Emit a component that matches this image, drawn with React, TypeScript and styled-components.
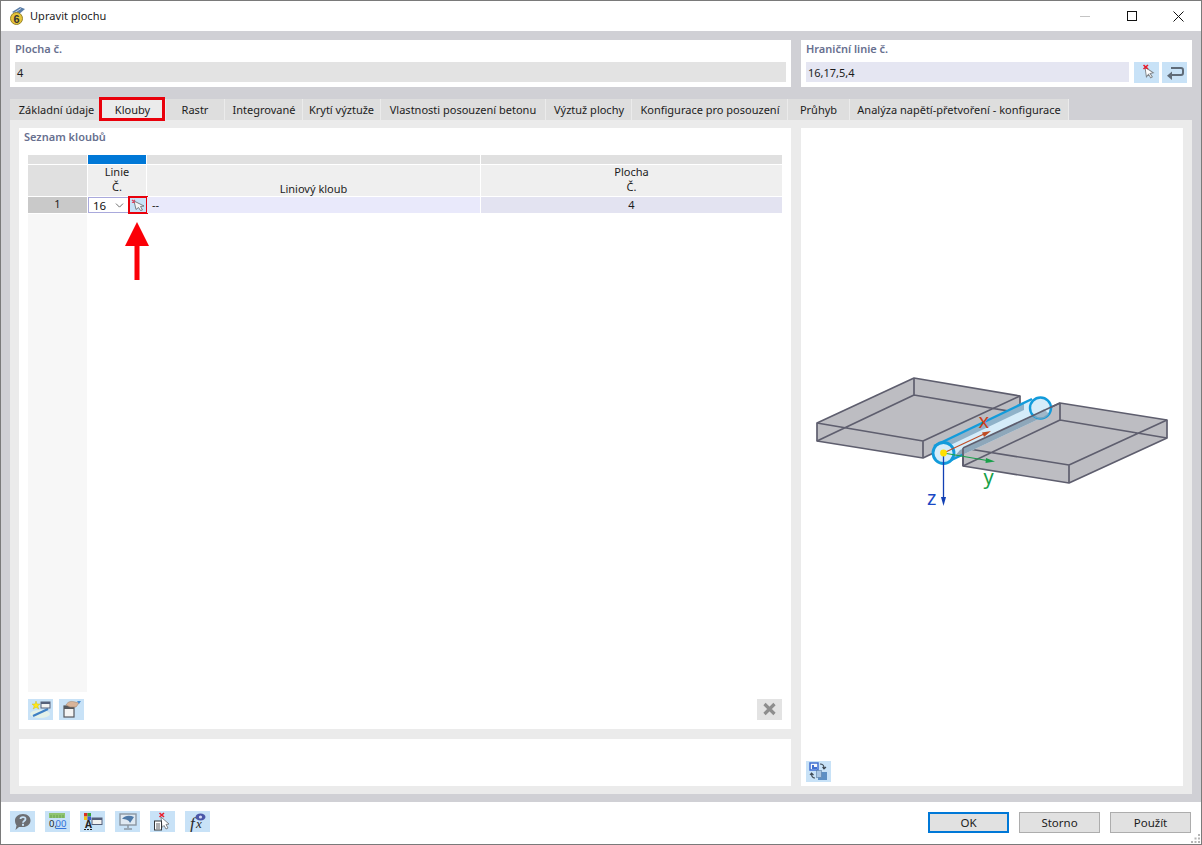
import { ReactNode } from "react";
import styled, { createGlobalStyle } from "styled-components";
import { ChevronDown } from "lucide-react";

const GlobalStyle = createGlobalStyle`
  html, body {
    margin: 0;
    padding: 0;
    background: #fff;
  }
  * {
    box-sizing: border-box;
  }
`;

const Window = styled.div`
  width: 1202px;
  height: 845px;
  display: flex;
  flex-direction: column;
  background: #fff;
  border: 1px solid #7a7a7a;
  font-family: "Noto Sans", "Open Sans", sans-serif;
  font-size: 11px;
  color: #1c1c1c;
  overflow: hidden;
`;

const TitleBar = styled.div`
  height: 30px;
  flex: none;
  display: flex;
  align-items: center;
  padding-left: 7px;
  gap: 2px;
`;

const TitleText = styled.div`
  font-size: 11px;
  letter-spacing: 0.05px;
  flex: 1;
  margin-top: -1px;
`;

const WinControl = styled.div`
  width: 45px;
  height: 30px;
  flex: none;
  display: flex;
  align-items: center;
  justify-content: center;
`;

const Body = styled.div`
  flex: 1;
  background: #d0d0d5;
  padding: 9px 9px 8px;
  display: flex;
  flex-direction: column;
`;

const TopRow = styled.div`
  display: flex;
  gap: 10px;
  height: 47px;
  margin-bottom: 12px;
`;

const TopBox = styled.div<{ $w: number }>`
  width: ${(p) => p.$w}px;
  background: #fff;
  padding: 1px 5px 0;
`;

const FieldLabel = styled.div`
  height: 21px;
  line-height: 15px;
  font-weight: 600;
  color: #68708f;
`;

const FieldRow = styled.div`
  display: flex;
  align-items: flex-start;
  gap: 5px;
`;

const Field = styled.div<{ $bg: string }>`
  flex: 1;
  height: 20px;
  line-height: 22px;
  padding-left: 2px;
  background: ${(p) => p.$bg};
`;

const ButtonPair = styled.div`
  display: flex;
  gap: 3px;
`;

const TabBar = styled.div`
  display: flex;
  height: 21px;
`;

const Tab = styled.div<{ $w: number; $shift: number; $active?: boolean }>`
  width: ${(p) => p.$w}px;
  flex: none;
  height: 21px;
  line-height: 22px;
  padding-left: ${(p) => p.$shift}px;
  text-align: center;
  white-space: nowrap;
  background: ${(p) => (p.$active ? "#ebebeb" : "#dedede")};
  border-right: 1px solid #ebebeb;
  position: relative;
  ${(p) =>
    p.$active &&
    `&::after {
      content: "";
      position: absolute;
      inset: -2px 0 -1px -1px;
      border: 3px solid #e9000b;
    }`}
`;

const TabPanel = styled.div`
  flex: 1;
  background: #ebebeb;
  padding: 8px 9px;
  display: flex;
  gap: 10px;
`;

const LeftCol = styled.div`
  width: 772px;
  display: flex;
  flex-direction: column;
  gap: 10px;
`;

const ListCard = styled.div`
  height: 601px;
  background: #fff;
  display: flex;
  flex-direction: column;
`;

const CardTitle = styled.div`
  height: 27px;
  padding: 1px 0 0 5px;
  line-height: 15px;
  font-weight: 600;
  color: #68708f;
`;

const TableArea = styled.div`
  margin: 0 9px;
  height: 537px;
  position: relative;
`;

const Table = styled.div`
  display: grid;
  height: 100%;
  grid-template-columns: 59px 58px 333px 301px;
  grid-template-rows: 9px 31px 16px 1fr;
  gap: 1px;
`;

const Band = styled.div<{ $blue?: boolean }>`
  background: ${(p) => (p.$blue ? "#0078d7" : "#e0e0e0")};
`;

const Corner = styled.div`
  background: #e0e0e0;
`;

const HeadCell = styled.div<{ $bottom?: boolean }>`
  background: #efefef;
  text-align: center;
  line-height: 15px;
  display: flex;
  flex-direction: column;
  justify-content: ${(p) => (p.$bottom ? "flex-end" : "center")};
  padding-bottom: ${(p) => (p.$bottom ? 0 : 3)}px;
`;

const RowNum = styled.div`
  background: #c9c9c9;
  text-align: center;
  line-height: 14px;
`;

const ComboCell = styled.div`
  background: #fff;
  display: flex;
`;

const Combo = styled.div`
  width: 41px;
  height: 16px;
  border: 1px solid #a9a9dc;
  display: flex;
  align-items: center;
  justify-content: space-between;
  padding: 0 2px 0 4px;
  font-size: 11.5px;
  color: #111;
`;

const CellPick = styled.div`
  width: 16px;
  height: 14px;
  margin: 1px 0 0 1px;
  background: #c8e2f7;
  outline: 2px solid #e9000b;
  display: flex;
  align-items: center;
  justify-content: center;
`;

const TextCell = styled.div<{ $bg: string; $center?: boolean }>`
  background: ${(p) => p.$bg};
  line-height: 15px;
  padding-left: ${(p) => (p.$center ? 0 : 5)}px;
  text-align: ${(p) => (p.$center ? "center" : "left")};
`;

const RowFill = styled.div`
  background: #f7f7f7;
`;

const ArrowOverlay = styled.svg`
  position: absolute;
  left: 96px;
  top: 66px;
`;

const CardTools = styled.div`
  display: flex;
  gap: 6px;
  margin: 7px 9px 0;
`;

const Spacer = styled.div`
  flex: 1;
`;

const IconBtn = styled.div<{ $off?: boolean }>`
  width: 25px;
  height: 21px;
  flex: none;
  background: ${(p) => (p.$off ? "#e3e3e3" : "#c8e2f7")};
  display: flex;
  align-items: center;
  justify-content: center;
`;

const MessageBox = styled.div`
  flex: 1;
  background: #fff;
`;

const PreviewCard = styled.div`
  width: 382px;
  background: #fff;
  display: flex;
  flex-direction: column;
  padding-bottom: 4px;
`;

const Diagram = styled.svg`
  display: block;
  flex: none;
`;

const PreviewTools = styled.div`
  padding-left: 5px;
`;

const Footer = styled.div`
  height: 42px;
  flex: none;
  display: flex;
  padding: 9px 10px 0 9px;
  position: relative;
`;

const FooterIcons = styled.div`
  display: flex;
  gap: 10px;
  flex: 1;
`;

const FooterBtns = styled.div`
  display: flex;
  gap: 10px;
  margin-top: 1px;
`;

const DialogBtn = styled.div<{ $primary?: boolean }>`
  width: 81px;
  height: 21px;
  background: #e1e1e1;
  border: ${(p) => (p.$primary ? "2px solid #0078d7" : "1px solid #adadad")};
  font-size: 11.5px;
  display: flex;
  align-items: center;
  justify-content: center;
`;

const Grip = styled.svg`
  position: absolute;
  right: 1px;
  bottom: 1px;
`;

const Ico = ({ children }: { children: ReactNode }) => (
  <svg width="25" height="21" viewBox="0 0 25 21">
    {children}
  </svg>
);

const cursor = "M0 0 L0 10.5 L2.6 8.2 L4.4 12.2 L6.2 11.4 L4.4 7.5 L7.8 7.3 Z";

const PickIcon = () => (
  <Ico>
    <path d={cursor} transform="translate(11 5) scale(0.95) rotate(-8)" fill="#fff" stroke="#7f8489" strokeWidth="1" />
    <path d="M9.5 3 L14 7 M14 3 L9.5 7" stroke="#ea1c2c" strokeWidth="1.6" />
  </Ico>
);

const SmallPick = () => (
  <svg width="16" height="14" viewBox="0 0 16 14">
    <path d="M4 3 L14 8 L10.5 8.5 L12.5 12 L10.5 12.5 L8.5 9.5 L6 11.5 Z" fill="#f4f4f4" stroke="#6f7479" strokeWidth="0.9" />
    <path d="M2 2 L5 4.5 M5 2 L2 4.5" stroke="#d9455f" strokeWidth="1.2" />
  </svg>
);

const ReturnIcon = () => (
  <Ico>
    <path d="M9 6 H19 Q21 6 21 8 V11 Q21 13 19 13 H9" fill="none" stroke="#5f6b78" strokeWidth="2" />
    <path d="M10 9.5 L5 13.8 L10 18 Z" fill="#5f6b78" />
  </Ico>
);

const NewLineIcon = () => (
  <Ico>
    <ellipse cx="12" cy="15" rx="10" ry="4" fill="#e4f1e8" />
    <path d="M5 17 L20 10" stroke="#3e7fc4" strokeWidth="2.2" />
    <path d="M8 2 L9 5 L12 5 L9.8 7 L10.8 10 L8 8.3 L5.2 10 L6.2 7 L4 5 L7 5 Z" fill="#ffe61a" stroke="#c9b800" strokeWidth="0.4" />
    <rect x="13" y="3" width="9" height="6" fill="#f2f2f2" stroke="#56607a" />
    <rect x="13" y="3" width="9" height="2" fill="#56607a" />
  </Ico>
);

const EditFolderIcon = () => (
  <Ico>
    <rect x="5" y="7" width="10" height="11" fill="#f4f4f4" stroke="#55585e" strokeWidth="1.2" />
    <rect x="5" y="7" width="10" height="3" fill="#55585e" />
    <path d="M7 6 C9 2 13 2 16 3 L20 4 L17 8 L11 8 Z" fill="#d8b49a" stroke="#a68870" strokeWidth="0.6" />
    <path d="M18 2 L22 2 L20 5 Z" fill="#4b8fd4" />
  </Ico>
);

const HelpIcon = () => (
  <Ico>
    <path d="M13 3 C18 3 20.5 6 20.5 9.5 C20.5 13.5 17 16 13 16 L9 16 L5.5 19 L6.5 14.5 C5.5 13 5 11.5 5 9.5 C5 6 8 3 13 3 Z" fill="#6d6f73" />
    <path d="M10.5 8 C10.5 5.8 15.5 5.4 15.5 8 C15.5 10 13 10 13 11.8" fill="none" stroke="#c8e2f7" strokeWidth="1.8" />
    <rect x="12" y="12.8" width="2" height="2" fill="#c8e2f7" />
  </Ico>
);

const DecimalsIcon = () => (
  <Ico>
    <rect x="4" y="2" width="16" height="5" fill="#8fc46f" />
    <path d="M6 4 V7 M9 4 V7 M12 4 V7 M15 4 V7 M18 4 V7" stroke="#5f9a48" strokeWidth="0.8" />
    <text x="4" y="16" fontFamily="Noto Sans, sans-serif" fontSize="9.5" fill="#222">0,</text>
    <text x="10.5" y="16" fontFamily="Noto Sans, sans-serif" fontSize="9.5" fill="#2f6fd8" textDecoration="underline">00</text>
  </Ico>
);

const ColorsIcon = () => (
  <Ico>
    <rect x="4" y="2" width="3.5" height="3.5" fill="#d93025" />
    <rect x="7.5" y="2" width="3.5" height="3.5" fill="#38a63a" />
    <rect x="4" y="5.5" width="3.5" height="3.5" fill="#f2c218" />
    <rect x="7.5" y="5.5" width="3.5" height="3.5" fill="#3a5bd0" />
    <text x="5" y="17" fontFamily="Noto Sans, sans-serif" fontSize="10" fontWeight="700" fill="#222">A</text>
    <path d="M4 18.5 H13" stroke="#222" strokeDasharray="2 1" />
    <rect x="12" y="7" width="10" height="6.5" fill="#f2f2f2" stroke="#56607a" />
    <rect x="12" y="7" width="10" height="2" fill="#56607a" />
  </Ico>
);

const MonitorIcon = () => (
  <Ico>
    <rect x="5" y="3" width="16" height="11" fill="#dfe9f2" stroke="#8b96a2" strokeWidth="1.4" />
    <path d="M7 8 C10 4 15 4 19 6 L15 12 C14 9 11 8 7 8 Z" fill="#4f7aa8" />
    <path d="M13 14 V17 M9 18 H17" stroke="#8b96a2" strokeWidth="1.5" />
  </Ico>
);

const DocPickIcon = () => (
  <Ico>
    <path d="M11 6 L19 13 L16 13.5 L18 17 L16 18 L14 14.5 L12 16.5 Z" fill="#fff" stroke="#7f8489" />
    <path d="M9.5 2 L14 6 M14 2 L9.5 6" stroke="#ea1c2c" strokeWidth="1.6" />
    <rect x="4.5" y="10" width="7" height="9" fill="#fff" stroke="#33363a" />
    <path d="M6 13 H10 M6 15 H10 M6 17 H10" stroke="#33363a" strokeWidth="0.8" />
  </Ico>
);

const FormulaIcon = () => (
  <Ico>
    <text x="5" y="18" fontFamily="Liberation Serif, serif" fontStyle="italic" fontSize="17" fill="#2a2a2a">f</text>
    <text x="11" y="17" fontFamily="Liberation Serif, serif" fontStyle="italic" fontSize="13" fill="#2a2a2a">x</text>
    <ellipse cx="15.5" cy="6" rx="5" ry="3.5" fill="#4b57a8" />
    <circle cx="15.5" cy="6" r="1.6" fill="#d8dcf5" />
  </Ico>
);

const SwapViewIcon = () => (
  <Ico>
    <rect x="4" y="2" width="8" height="7" fill="#f3f6fb" stroke="#3f6fd1" strokeWidth="1.5" />
    <rect x="6" y="4" width="2" height="4" fill="#3f6fd1" />
    <rect x="6" y="6" width="5" height="2" fill="#3f6fd1" />
    <path d="M14 3 C17 3 18 5 18 7 M16.5 6 L18 8 L20 6" fill="none" stroke="#3c4650" strokeWidth="1.1" />
    <path d="M9 17 C6 17 5.5 15 5.5 12.5 M4 14 L5.5 12 L7.5 14" fill="none" stroke="#3c4650" strokeWidth="1.1" />
    <rect x="12" y="11" width="9" height="8" fill="#5d8fc4" />
    <rect x="10.5" y="9.5" width="5" height="7" fill="#a9c5e2" stroke="#5d7fa5" strokeWidth="0.6" />
  </Ico>
);

const CloseGrayIcon = () => (
  <Ico>
    <path d="M7.5 5 L17.5 15 M17.5 5 L7.5 15" stroke="#8e8e8e" strokeWidth="3.2" />
  </Ico>
);

const AppLogo = () => (
  <svg width="20" height="20" viewBox="0 0 20 20">
    <path d="M4 6 L12 1 L17 3 L10 9 Z" fill="#5b7ea8" />
    <path d="M6 7 L13 2.5" stroke="#c4d4e6" />
    <circle cx="8.5" cy="12.5" r="6" fill="#e6c53a" stroke="#97832a" />
    <text x="5.4" y="16.5" fontFamily="Liberation Sans, sans-serif" fontSize="11" fontWeight="700" fill="#333">6</text>
  </svg>
);

const plate = "#bdbdc2";
const edge = "#5e5e6e";
const hingeBlue = "#129bdb";

const PlatesDiagram = () => (
  <Diagram width="382" height="633" viewBox="801 128 382 633">
    {/* left plate */}
    <g stroke={edge} strokeWidth="1.7" strokeLinejoin="round">
      <path d="M817 423 L914 378 L1020 396 L1020 412 L923 458 L817 441 Z" fill={plate} />
      <path d="M817 423 L923 441 L1020 396 M923 441 V458 M914 378 V395 M817 441 L914 395 L1020 413" fill="none" />
    </g>
    {/* right plate */}
    <g stroke={edge} strokeWidth="1.7" strokeLinejoin="round">
      <path d="M963 448 L1060 403 L1167 420 L1167 438 L1069 483 L963 466 Z" fill={plate} />
      <path d="M1069 465 L1167 420 M963 448 L1069 465 M1069 465 V483 M1060 403 V420 M963 466 L1060 420 L1167 438" fill="none" />
    </g>
    {/* hinge, drawn through the plates */}
    <path d="M934 446 L1032 399 L1049.5 414 L951.5 460 Z" fill="#d5ecf9" />
    <path d="M936 445 L1024 403 L1024 410 L940 450 Z" fill="#8fb2c9" />
    <path d="M960 450 L1044 410 L1049.5 414 L951.5 460 Z" fill="#8ea7ba" />
    <circle cx="1040.5" cy="408" r="10.5" fill="#d5ecf9" stroke={hingeBlue} strokeWidth="2.4" />
    <path d="M1033 416 A10.5 10.5 0 0 0 1049 414 L1044 409 Z" fill="#8ea7ba" opacity="0.75" />
    <path d="M934 446 L1032 399" stroke={hingeBlue} strokeWidth="2.4" />
    <path d="M951.5 460 L963 454.5" stroke={hingeBlue} strokeWidth="2.4" />
    <path d="M963 448 L1060 403" stroke={edge} strokeWidth="1.7" />
    <path d="M963 448 V466" stroke={edge} strokeWidth="1.7" />
    <circle cx="943.5" cy="453" r="10.5" fill="#d5ecf9" stroke={hingeBlue} strokeWidth="2.8" />
    {/* axes */}
    <path d="M943.5 453 L984 434" stroke="#bf4a22" strokeWidth="1.1" />
    <path d="M991 431 L982 432.5 L984 437 Z" fill="#bf4a22" />
    <path d="M943.5 453 L990 461" stroke="#18a04a" strokeWidth="1.2" />
    <path d="M995 461.5 L986 458 L985.5 463 Z" fill="#18a04a" />
    <path d="M943.5 453 V500" stroke="#1240b4" strokeWidth="1.3" />
    <path d="M943.5 506 L941 497 L946 497 Z" fill="#1240b4" />
    <circle cx="943.5" cy="453" r="3.4" fill="#ffdf00" />
    <text x="978.5" y="428" fontFamily="Noto Sans, sans-serif" fontSize="20" fill="#c9401c">x</text>
    <text x="983.5" y="484" fontFamily="Noto Sans, sans-serif" fontSize="20" fill="#18a04a">y</text>
    <text x="927" y="505" fontFamily="Noto Sans, sans-serif" fontSize="20" fill="#1a48c4">z</text>
  </Diagram>
);

const tabs: [string, number, number][] = [
  ["Základní údaje", 90, 4],
  ["Klouby", 66, 0],
  ["Rastr", 59, 0],
  ["Integrované", 78, 1],
  ["Krytí výztuže", 78, 0],
  ["Vlastnosti posouzení betonu", 165, 0],
  ["Výztuž plochy", 86, 1],
  ["Konfigurace pro posouzení", 156, 1],
  ["Průhyb", 62, 0],
  ["Analýza napětí-přetvoření - konfigurace", 219, 0],
];

export default function App() {
  return (
    <Window>
      <GlobalStyle />
      <TitleBar>
        <AppLogo />
        <TitleText>Upravit plochu</TitleText>
        <WinControl>
          <svg width="10" height="10" viewBox="0 0 10 10">
            <path d="M0 5.5 H10" stroke="#c4c4c4" />
          </svg>
        </WinControl>
        <WinControl>
          <svg width="10" height="10" viewBox="0 0 10 10">
            <rect x="0.5" y="0.5" width="9" height="9" fill="none" stroke="#111" />
          </svg>
        </WinControl>
        <WinControl>
          <svg width="11" height="11" viewBox="0 0 11 11">
            <path d="M0.5 0.5 L10.5 10.5 M10.5 0.5 L0.5 10.5" stroke="#111" />
          </svg>
        </WinControl>
      </TitleBar>
      <Body>
        <TopRow>
          <TopBox $w={781}>
            <FieldLabel>Plocha č.</FieldLabel>
            <FieldRow>
              <Field $bg="#e3e3e3">4</Field>
            </FieldRow>
          </TopBox>
          <TopBox $w={391}>
            <FieldLabel>Hraniční linie č.</FieldLabel>
            <FieldRow>
              <Field $bg="#e5e6f2">16,17,5,4</Field>
              <ButtonPair>
                <IconBtn>
                  <PickIcon />
                </IconBtn>
                <IconBtn>
                  <ReturnIcon />
                </IconBtn>
              </ButtonPair>
            </FieldRow>
          </TopBox>
        </TopRow>
        <TabBar>
          {tabs.map(([name, w, shift]) => (
            <Tab key={name} $w={w} $shift={shift} $active={name === "Klouby"}>
              {name}
            </Tab>
          ))}
        </TabBar>
        <TabPanel>
          <LeftCol>
            <ListCard>
              <CardTitle>Seznam kloubů</CardTitle>
              <TableArea>
                <Table>
                  <Band />
                  <Band $blue />
                  <Band />
                  <Band />
                  <Corner />
                  <HeadCell>
                    <span>Linie</span>
                    <span>Č.</span>
                  </HeadCell>
                  <HeadCell $bottom>Liniový kloub</HeadCell>
                  <HeadCell>
                    <span>Plocha</span>
                    <span>Č.</span>
                  </HeadCell>
                  <RowNum>1</RowNum>
                  <ComboCell>
                    <Combo>
                      16
                      <ChevronDown size={13} strokeWidth={1.4} color="#444" />
                    </Combo>
                    <CellPick>
                      <SmallPick />
                    </CellPick>
                  </ComboCell>
                  <TextCell $bg="#e9e9fb">--</TextCell>
                  <TextCell $bg="#e3e3f1" $center>
                    4
                  </TextCell>
                  <RowFill />
                </Table>
                <ArrowOverlay width="26" height="60" viewBox="0 0 26 60">
                  <path d="M13 1 L25 25 H15.5 V59 H10.5 V25 H1 Z" fill="#fb0007" />
                </ArrowOverlay>
              </TableArea>
              <CardTools>
                <IconBtn>
                  <NewLineIcon />
                </IconBtn>
                <IconBtn>
                  <EditFolderIcon />
                </IconBtn>
                <Spacer />
                <IconBtn $off>
                  <CloseGrayIcon />
                </IconBtn>
              </CardTools>
            </ListCard>
            <MessageBox />
          </LeftCol>
          <PreviewCard>
            <PlatesDiagram />
            <PreviewTools>
              <IconBtn>
                <SwapViewIcon />
              </IconBtn>
            </PreviewTools>
          </PreviewCard>
        </TabPanel>
      </Body>
      <Footer>
        <FooterIcons>
          <IconBtn>
            <HelpIcon />
          </IconBtn>
          <IconBtn>
            <DecimalsIcon />
          </IconBtn>
          <IconBtn>
            <ColorsIcon />
          </IconBtn>
          <IconBtn>
            <MonitorIcon />
          </IconBtn>
          <IconBtn>
            <DocPickIcon />
          </IconBtn>
          <IconBtn>
            <FormulaIcon />
          </IconBtn>
        </FooterIcons>
        <FooterBtns>
          <DialogBtn $primary>OK</DialogBtn>
          <DialogBtn>Storno</DialogBtn>
          <DialogBtn>Použít</DialogBtn>
        </FooterBtns>
        <Grip width="10" height="10" viewBox="0 0 10 10">
          <path d="M8 1 h2 v2 h-2z M8 4.5 h2 v2 h-2z M4.5 4.5 h2 v2 h-2z M8 8 h2 v2 h-2z M4.5 8 h2 v2 h-2z M1 8 h2 v2 h-2z" fill="#b5b5b5" />
        </Grip>
      </Footer>
    </Window>
  );
}
